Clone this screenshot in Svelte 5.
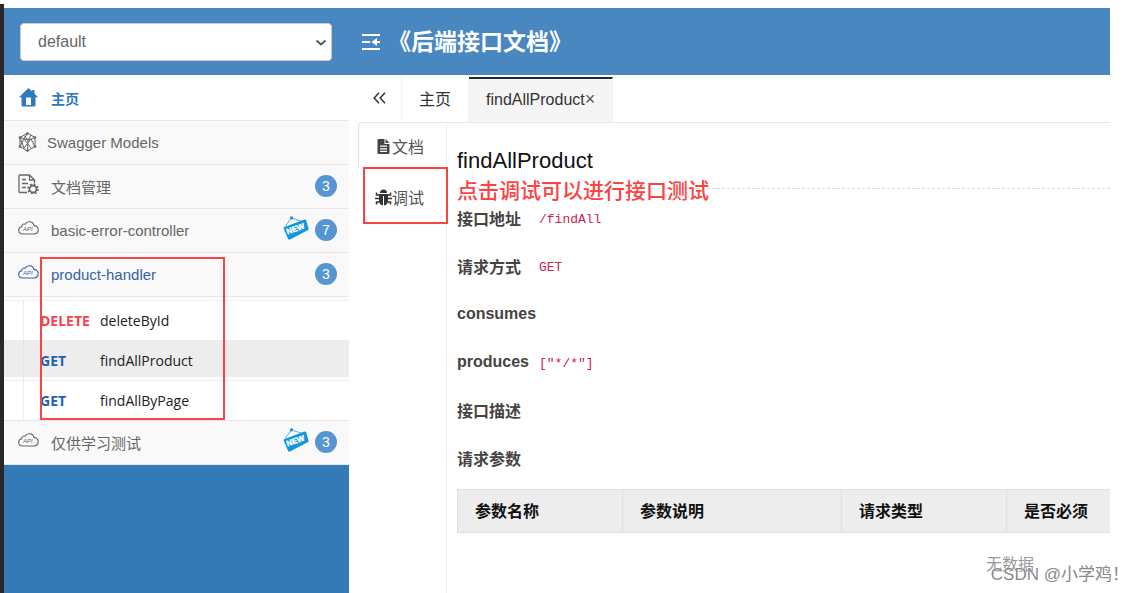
<script lang="ts">
  type Group = { name: string; icon: string; count?: number; fresh?: boolean; open?: boolean };

  const groups: Group[] = [
    { name: 'Swagger Models', icon: 'models' },
    { name: '文档管理', icon: 'docs', count: 3 },
    { name: 'basic-error-controller', icon: 'api', count: 7, fresh: true },
    { name: 'product-handler', icon: 'api', count: 3, open: true },
    { name: '仅供学习测试', icon: 'api', count: 3, fresh: true },
  ];

  const endpoints = [
    { method: 'DELETE', name: 'deleteById' },
    { method: 'GET', name: 'findAllProduct' },
    { method: 'GET', name: 'findAllByPage' },
  ];

  const details = [
    { label: '接口地址', value: '/findAll' },
    { label: '请求方式', value: 'GET' },
    { label: 'consumes', value: '' },
    { label: 'produces', value: '["*/*"]' },
    { label: '接口描述', value: '' },
    { label: '请求参数', value: '' },
  ];

  const columns = ['参数名称', '参数说明', '请求类型', '是否必须'];

  let active = $state('findAllProduct');
</script>

<div class="page">
  <div class="frame">
    <header>
      <div class="picker">
        <select aria-label="default">
          <option>default</option>
        </select>
        <svg class="chevron" width="12" height="8" viewBox="0 0 12 8">
          <path d="M1.5 1.5 6 5.5l4.5-4" fill="none" stroke="#555" stroke-width="1.8" />
        </svg>
      </div>
      <button class="fold" aria-label="menu">
        <svg width="20" height="18" viewBox="0 0 20 18" fill="none" stroke="#fff" stroke-width="2.2">
          <path d="M1 2h18M1 9h8M1 16h18M13 9h6" />
          <path d="M10.5 9l5.5-4v8z" fill="#fff" stroke="none" />
        </svg>
      </button>
      <h1>《后端接口文档》</h1>
    </header>

    <div class="body">
      <nav>
        <a href="#home" class="row home">
          <span class="icon">
            <svg width="19" height="19" viewBox="0 0 19 19" fill="#2c79bb">
              <path d="M9.5 0 0 9.200h2.5V17q0 1.5 1.5 1.5h11q1.5 0 1.5-1.5V9.200H19L15.5 5.800V2h-2.300v1.600zM7 9.5h5V17H7z" fill-rule="evenodd" />
            </svg>
          </span>
          主页
        </a>
        {#each groups as group}
          <div class="group">
            <a href="#group" class="row {group.icon}" class:open={group.open}>
              <span class="icon">
                {#if group.icon === 'models'}
                  <svg width="19" height="20" viewBox="0 0 19 20" fill="none" stroke="currentColor" stroke-width="1">
                    <path d="M9.5 1 17 5.5v9L9.5 19 2 14.5v-9z" />
                    <path d="M2 5.5 10 8l7-2.5M10 8l-.5 11M6 3.500 10 8l3-5M2 14.5 6 7M17 14.5 13 7M6 7l7 9M13 7l-7 9M6 7l3.500-6M2 5.5l4 10.500" />
                    <circle cx="9.5" cy="1.5" r="1" /><circle cx="17" cy="5.5" r="1" />
                    <circle cx="17" cy="14.5" r="1" /><circle cx="9.5" cy="18.5" r="1" />
                    <circle cx="2" cy="14.5" r="1" /><circle cx="2" cy="5.5" r="1" />
                  </svg>
                {:else if group.icon === 'docs'}
                  <svg width="21" height="20" viewBox="0 0 21 20" fill="none" stroke="currentColor" stroke-width="1.3">
                    <path d="M9 18.5H2Q1 18.5 1 17.5V2q0-1 1-1h9.5L16.5 6v3M11.5 1v5h5M4 5.5h4M4 9.5h6M4 13.5h4" />
                    <circle cx="15" cy="15" r="3.5" stroke-width="1.8" />
                    <circle cx="15" cy="15" r="5" stroke-width="1.5" stroke-dasharray="2 1.93" />
                  </svg>
                {:else}
                  <svg width="21" height="14" viewBox="0 0 21 14" fill="none" stroke="currentColor" stroke-width="1.1">
                    <path d="M5 13C2.5 13 .7 11.5 .7 9.300c0-2 1.5-3.300 3.100-3.600C3.5 3.5 5.5 2.5 7 3.200 8 1.5 9.5.7 11.300.7c2.600 0 4.300 1.700 4.700 4 2.300-.3 4.200 1.300 4.200 3.900 0 2.700-1.700 4.400-4.200 4.400z" />
                    <text x="5" y="10" fill="currentColor" stroke="none" font-size="6" font-style="italic">API</text>
                  </svg>
                {/if}
              </span>
              <span class="name">{group.name}</span>
              {#if group.fresh}
                <svg class="new" width="26" height="24" viewBox="0 0 26 24">
                  <path d="M2 10.5 8.5 2 21 6" fill="none" stroke="#4fb0e2" stroke-width="1" />
                  <circle cx="8.5" cy="1.8" r="1.6" fill="#1691d6" />
                  <path d="M1.5 11 21.5 3.5q1.300-.4 1.700.8l2.400 8.5q.3 1-.9 1.5L7 23.400q-1.5.5-2-.7L.6 12.5q-.3-1 .9-1.5z" fill="#1295db" />
                  <text x="4.5" y="18.5" transform="rotate(-20 4.5 18.5)" fill="#fff" stroke="#fff" stroke-width=".4" font-size="8" font-weight="bold">NEW</text>
                </svg>
              {/if}
              {#if group.count}
                <span class="badge">{group.count}</span>
              {/if}
            </a>
            {#if group.open}
              <ul>
                {#each endpoints as endpoint}
                  <li class:active={endpoint.name === active}>
                    <a href="#endpoint" onclick={() => (active = endpoint.name)}>
                      <b class={endpoint.method.toLowerCase()}>{endpoint.method}</b>
                      {endpoint.name}
                    </a>
                  </li>
                {/each}
              </ul>
              <div class="mark"></div>
            {/if}
          </div>
        {/each}
      </nav>

      <main>
        <div class="tabs">
          <button class="back" aria-label="back">
            <svg width="13" height="12" viewBox="0 0 13 12" fill="none" stroke="#333" stroke-width="1.5">
              <path d="M6 .8 1.2 6 6 11.2M12 .8 7.2 6l4.8 5.2" />
            </svg>
          </button>
          <button>主页</button>
          <button class="current">findAllProduct<span class="close">×</span></button>
        </div>

        <div class="panel">
          <div class="side">
            <button class="doc">
              <svg width="13" height="15" viewBox="0 0 12 15">
                <path d="M1 0h6v5h5v9q0 1-1 1H1q-1 0-1-1V1q0-1 1-1zM8 0l4 4H8zM2.5 6.5v1.300h7v-1.300zm0 2.700v1.300h7v-1.300zm0 2.600v1.200h7v-1.200z" fill="#444" fill-rule="evenodd" />
              </svg>
              文档
            </button>
            <button class="debug">
              <svg width="17" height="17" viewBox="0 0 17 17" fill="#333">
                <path d="M5 4a3.5 3.5 0 0 1 7 0zM4 5h9v7q-.5 4-4 4.5V7H8v9.5Q4.5 16 4 12z" />
                <path d="M1.5 3.5v2.500h3M15.5 3.5v2.500h-3M0 9.500h4M17 9.500h-4M1.500 15.500v-2.500h3M15.500 15.500v-2.500h-3" fill="none" stroke="#333" stroke-width="1.5" />
              </svg>
              调试
              <span class="mark"></span>
            </button>
          </div>

          <section>
            <h2>findAllProduct</h2>
            <p class="note">点击调试可以进行接口测试</p>
            <dl>
              {#each details as item}
                <div>
                  <dt>{item.label}</dt>
                  <dd><code>{item.value}</code></dd>
                </div>
              {/each}
            </dl>
            <div class="scroll">
              <table>
                <thead>
                  <tr>
                    {#each columns as column}
                      <th>{column}</th>
                    {/each}
                  </tr>
                </thead>
                <tbody>
                  <tr>
                    <td colspan="4">无数据</td>
                  </tr>
                </tbody>
              </table>
            </div>
          </section>
        </div>
      </main>
    </div>
  </div>
  <span class="watermark">CSDN @小学鸡！</span>
</div>

<style>
  :global(body) {
    background: #fff;
  }

  .page {
    position: relative;
    box-sizing: border-box;
    display: flex;
    min-height: 100vh;
    padding: 4px 23px 0 0;
    overflow: hidden;
    font-family: 'Liberation Sans', 'Noto Sans CJK SC', sans-serif;
    font-size: 15px;
    color: #333;
  }

  .frame {
    display: flex;
    flex-direction: column;
    flex: 1;
    min-width: 0;
    padding-top: 4px;
    border-left: 4px solid #2b2729;
  }

  button {
    padding: 0;
    border: 0;
    background: none;
    font: inherit;
    color: inherit;
  }

  a {
    color: inherit;
    text-decoration: none;
  }

  header {
    display: flex;
    align-items: center;
    height: 67px;
    background: #4887bf;
  }

  .picker {
    position: relative;
    width: 312px;
    margin: 0 29px 0 16px;
  }

  .picker select {
    display: block;
    appearance: none;
    width: 100%;
    height: 38px;
    padding: 0 17px;
    border: 1px solid #ccc;
    border-radius: 4px;
    background: #fff;
    font: inherit;
    font-size: 16px;
    color: #666;
  }

  .chevron {
    position: absolute;
    right: 5px;
    top: 16px;
  }

  .fold {
    display: flex;
  }

  h1 {
    margin: 0 0 0 7px;
    font-size: 23px;
    line-height: 32px;
    color: #fff;
  }

  .body {
    display: flex;
    flex: 1;
  }

  nav {
    flex: 0 0 345px;
    background: #337ab7;
  }

  .group {
    position: relative;
  }

  .row {
    box-sizing: border-box;
    display: flex;
    align-items: center;
    height: 44px;
    padding: 0 12px 1px 14px;
    border-bottom: 1px solid #e7e7e7;
    background: #f9f9f9;
    color: #666;
  }

  .row .icon {
    display: flex;
    width: 33px;
  }

  .row .name {
    flex: 1;
  }

  .row.models .icon {
    width: 29px;
  }

  .row.docs .icon,
  .row.api .icon,
  .new {
    margin-bottom: 4px;
  }

  .row.home {
    height: 46px;
    padding-bottom: 0;
    background: #fff;
    color: #2c79bb;
    font-size: 14px;
    font-weight: bold;
  }

  .row.home .icon {
    padding-left: 1px;
    width: 32px;
  }

  .row.open {
    color: #3463a8;
  }

  .new {
    margin-right: 6px;
  }

  .badge {
    width: 22px;
    border-radius: 11px;
    background: #5696d0;
    color: #fff;
    font-size: 14px;
    line-height: 22px;
    text-align: center;
  }

  ul {
    margin: 0;
    padding: 3px 0 0;
    border-bottom: 1px solid #e4e4e4;
    list-style: none;
    background: #fff;
    font-family: 'Open Sans', 'Noto Sans CJK SC', sans-serif;
    font-size: 14px;
    color: #222;
  }

  li {
    border-top: 1px solid #eee;
  }

  li a {
    display: flex;
    align-items: center;
    height: 39px;
    margin-left: 19px;
    padding-left: 16px;
    border-left: 1px dotted #cfdfec;
  }

  li.active {
    border-color: #ededed;
    background: linear-gradient(#ededed, #ededed) 0 0 / 100% calc(100% - 3px) no-repeat;
  }

  li b {
    width: 60px;
  }

  .delete {
    color: #f5424c;
  }

  .get {
    color: #1d62ad;
  }

  .mark {
    position: absolute;
    box-sizing: border-box;
    border: 2px solid #f94444;
    pointer-events: none;
  }

  .group .mark {
    inset: 4px 124px 1px 36px;
  }

  main {
    flex: 1;
    min-width: 0;
    padding-left: 9px;
  }

  .tabs {
    display: flex;
    height: 47px;
    font-size: 16px;
  }

  .tabs button {
    padding: 0 17px 2px;
    border-right: 1px solid #f2f2f2;
  }

  .tabs .back {
    width: 44px;
    padding: 0;
  }

  .tabs .current {
    margin-top: 2px;
    border-top: 2px solid #23262e;
    background: #f5f5f5;
  }

  .close {
    color: #555;
    font-size: 18px;
    line-height: 16px;
  }

  .panel {
    display: flex;
    min-height: calc(100% - 48px);
    border-top: 1px solid #e6e6e6;
    border-radius: 4px 0 0 0;
  }

  .side {
    flex: 0 0 88px;
    display: flex;
    flex-direction: column;
    border-right: 1px solid #eee;
    font-size: 16px;
    color: #555;
  }

  .side button {
    position: relative;
    display: flex;
    align-items: center;
    gap: 2px;
    height: 46px;
    padding-left: 18px;
  }

  .side .doc {
    border: solid #ddd;
    border-width: 0 0 0 1px;
    border-radius: 4px;
  }

  .side .debug {
    gap: 0;
    height: 56px;
    padding-left: 17px;
  }

  .side .mark {
    inset: -2px -2px 1px 5px;
  }

  section {
    position: relative;
    flex: 1;
    min-width: 0;
    padding-left: 10px;
  }

  h2 {
    margin: 0;
    padding: 24px 0 14px;
    border-bottom: 1px dashed #ddd;
    font-size: 22px;
    font-weight: normal;
    line-height: 27px;
    color: #111;
  }

  .note {
    position: absolute;
    top: 52px;
    left: 10px;
    margin: 0;
    font-size: 21px;
    font-weight: 500;
    line-height: 32px;
    color: #f94444;
  }

  dl {
    margin: 5px 0 7px;
    font-size: 16px;
  }

  dl div {
    display: flex;
    align-items: center;
    height: 48px;
  }

  dt {
    width: 82px;
    font-weight: bold;
    color: #444;
  }

  dd {
    margin: 0;
  }

  code {
    font-family: 'Liberation Mono', monospace;
    font-size: 13px;
    color: #c7254e;
  }

  .scroll {
    overflow: hidden;
  }

  table {
    width: 1106px;
    border-collapse: collapse;
    table-layout: fixed;
    font-size: 16px;
  }

  th {
    width: 165px;
    height: 43px;
    padding: 0 17px 2px;
    box-sizing: border-box;
    border: 1px solid #e0e0e0;
    background: #ededed;
    color: #111;
    text-align: left;
  }

  th:nth-child(2) {
    width: 219px;
  }

  th:last-child {
    width: auto;
  }

  td {
    height: 60px;
    padding: 0;
    color: #999;
    text-align: center;
  }

  .watermark {
    position: absolute;
    right: 4px;
    bottom: 5px;
    font-size: 17px;
    line-height: 26px;
    color: #888;
    text-shadow: 0 0 1px #fff;
  }
</style>
